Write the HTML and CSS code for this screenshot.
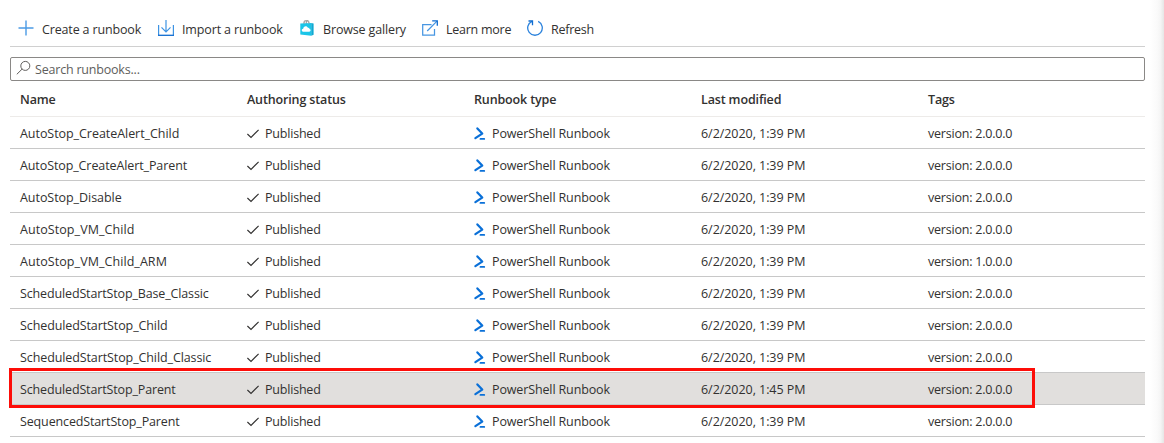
FILE: index.html
```html
<!DOCTYPE html>
<html lang="en">
<head>
<meta charset="utf-8">
<title>Runbooks</title>
<link rel="stylesheet" href="styles.css">
</head>
<body>
<svg class="defs" width="0" height="0">
  <symbol id="check" viewBox="0 0 12 10"><path d="M.4 5 4 8.4 11.6 .8" fill="none" stroke="#323130" stroke-width="1.15"/></symbol>
  <symbol id="ps" viewBox="0 0 12 14"><path d="M3.4 1.4 8.2 6.6 1.4 11.2" fill="none" stroke="#0a70d8" stroke-width="2.2" stroke-linecap="round" stroke-linejoin="round"/><path d="M6.5 11.9h3.7" stroke="#0a70d8" stroke-width="1.9" stroke-linecap="round"/></symbol>
</svg>
<main class="blade">
  <nav class="toolbar">
    <button class="command create"><svg width="16" height="16" viewBox="0 0 16 16"><path d="M8 .5v15M.5 8h15" stroke="#4b9be5" stroke-width="1.4"/></svg><span>Create a runbook</span></button>
    <button class="command import"><svg width="16" height="16" viewBox="0 0 16 16"><path d="M.6 5v10M15.4 5v10M8 0v12M3.5 7.3 8 12l4.5-4.7" fill="none" stroke="#3d93e3" stroke-width="1.2"/><path d="M0 15.3h16" stroke="#0f6cd0" stroke-width="1.3"/></svg><span>Import a runbook</span></button>
    <button class="command gallery"><svg width="14" height="16" viewBox="0 0 14 16"><path d="M4 4.5V2.2Q4 .7 5.4.7h2Q8.9.7 8.9 2.2v2.3M6.3 4V2q0-1.3 1.4-1.3" fill="none" stroke="#999" stroke-width="1.1"/><path d="M.3 3.5 11.2 3v12.7L.3 14.5z" fill="#1bc5e8"/><path d="m11.2 3 2.4.5v11.3l-2.4.9z" fill="#10a9d2"/><path d="M4.4 3.7V2.2q0-1.3 1.2-1.3h1.9q1.2 0 1.2 1.3v1.5" fill="none" stroke="#aaa" stroke-width=".8"/><path d="M3.6 11.7c-2.3 0-2.5-2.8-.4-3 .1-3 4-3.4 4.7-.9 1.4-.2 1.7.8 1.6 1.3 1.7.2 1.4 2.6-.3 2.6z" fill="#fff"/></svg><span>Browse gallery</span></button>
    <button class="command learn"><svg width="16" height="16" viewBox="0 0 16 16"><path d="M9.5 4.5H.7v10.7h11.8V9M5.2 11 15 1.1" fill="none" stroke="#4796e2" stroke-width="1.25"/><path d="M10.2.8h5.1v5" fill="none" stroke="#0f6cd0" stroke-width="1.3"/></svg><span>Learn more</span></button>
    <button class="command refresh"><svg width="16" height="16" viewBox="0 0 16 16"><path d="M11.2 1.4A7.3 7.3 0 1 1 5 1.3" fill="none" stroke="#2b82dc" stroke-width="1.3"/><path d="M1.5 1h4v4.2" fill="none" stroke="#0f6cd0" stroke-width="1.3"/></svg><span>Refresh</span></button>
  </nav>
  <label class="search"><svg width="16" height="16" viewBox="0 0 16 16"><circle cx="9.3" cy="5.9" r="4.5" fill="none" stroke="#605e5c"/><path d="M6.1 9.1.8 14.3" stroke="#605e5c"/></svg><span>Search runbooks...</span></label>
  <section class="table">
    <div class="row head"><span>Name</span><span>Authoring status</span><span>Runbook type</span><span>Last modified</span><span>Tags</span></div>
    <div class="row"><span class="wide">AutoStop_CreateAlert_Child</span><span class="status"><svg><use href="#check"/></svg>Published</span><span class="type"><svg><use href="#ps"/></svg>PowerShell Runbook</span><span class="date">6/2/2020, 1:39 PM</span><span class="tag">version: 2.0.0.0</span></div>
    <div class="row"><span>AutoStop_CreateAlert_Parent</span><span class="status"><svg><use href="#check"/></svg>Published</span><span class="type"><svg><use href="#ps"/></svg>PowerShell Runbook</span><span class="date">6/2/2020, 1:39 PM</span><span class="tag">version: 2.0.0.0</span></div>
    <div class="row"><span class="wide">AutoStop_Disable</span><span class="status"><svg><use href="#check"/></svg>Published</span><span class="type"><svg><use href="#ps"/></svg>PowerShell Runbook</span><span class="date">6/2/2020, 1:39 PM</span><span class="tag">version: 2.0.0.0</span></div>
    <div class="row"><span class="wider">AutoStop_VM_Child</span><span class="status"><svg><use href="#check"/></svg>Published</span><span class="type"><svg><use href="#ps"/></svg>PowerShell Runbook</span><span class="date">6/2/2020, 1:39 PM</span><span class="tag">version: 2.0.0.0</span></div>
    <div class="row"><span class="wider">AutoStop_VM_Child_ARM</span><span class="status"><svg><use href="#check"/></svg>Published</span><span class="type"><svg><use href="#ps"/></svg>PowerShell Runbook</span><span class="date">6/2/2020, 1:39 PM</span><span class="tag">version: 1.0.0.0</span></div>
    <div class="row"><span class="tight">ScheduledStartStop_Base_Classic</span><span class="status"><svg><use href="#check"/></svg>Published</span><span class="type"><svg><use href="#ps"/></svg>PowerShell Runbook</span><span class="date">6/2/2020, 1:39 PM</span><span class="tag">version: 2.0.0.0</span></div>
    <div class="row"><span>ScheduledStartStop_Child</span><span class="status"><svg><use href="#check"/></svg>Published</span><span class="type"><svg><use href="#ps"/></svg>PowerShell Runbook</span><span class="date">6/2/2020, 1:39 PM</span><span class="tag">version: 2.0.0.0</span></div>
    <div class="row"><span>ScheduledStartStop_Child_Classic</span><span class="status"><svg><use href="#check"/></svg>Published</span><span class="type"><svg><use href="#ps"/></svg>PowerShell Runbook</span><span class="date">6/2/2020, 1:39 PM</span><span class="tag">version: 2.0.0.0</span></div>
    <div class="row selected"><span class="tight">ScheduledStartStop_Parent</span><span class="status"><svg><use href="#check"/></svg>Published</span><span class="type"><svg><use href="#ps"/></svg>PowerShell Runbook</span><span class="date">6/2/2020, 1:45 PM</span><span class="tag">version: 2.0.0.0</span><i class="highlight"></i></div>
    <div class="row"><span class="tight">SequencedStartStop_Parent</span><span class="status"><svg><use href="#check"/></svg>Published</span><span class="type"><svg><use href="#ps"/></svg>PowerShell Runbook</span><span class="date">6/2/2020, 1:39 PM</span><span class="tag">version: 2.0.0.0</span></div>
  </section>
</main>
<div class="edge"></div>
</body>
</html>
```
FILE: styles.css
```css
* { box-sizing: border-box; }
body {
  margin: 0;
  height: 443px;
  overflow: hidden;
  display: flex;
  background: #fff;
  color: #323130;
  font: 12.5px/18px "Open Sans", "Noto Sans", sans-serif;
  letter-spacing: -0.1px;
}
.defs { position: absolute; }
.blade { width: 1135px; margin-left: 10px; }
.edge {
  width: 14px;
  margin-left: auto;
  background: linear-gradient(to right, #fff, #fafafa 50%, #f5f5f5 75%, #e6e6e6);
}
.toolbar {
  height: 47px;
  padding: 12px 0 0 8px;
  border-bottom: 1px solid #d0d0d0;
  display: flex;
  align-items: flex-start;
}
.command {
  display: flex;
  gap: 8px;
  padding: 0;
  border: 0;
  background: none;
  color: inherit;
  font: inherit;
  letter-spacing: -0.15px;
  height: 34px;
  align-items: center;
  white-space: nowrap;
}
.command svg { flex: none; margin-top: -2px; }
.command span, .search span { padding-top: 2px; }
.create { width: 140px; }
.import { width: 142px; letter-spacing: -0.14px; }
.gallery { width: 122px; gap: 9px; }
.learn { width: 105px; letter-spacing: -0.25px; }
.refresh { letter-spacing: -0.25px; }
.search {
  display: flex;
  align-items: center;
  height: 24px;
  margin-top: 10px;
  padding-left: 5px;
  gap: 3px;
  border: 1px solid #8a8886;
  border-radius: 2px;
  color: #605e5c;
  letter-spacing: -0.2px;
}
.search svg { margin-top: -2px; }
.row {
  position: relative;
  display: grid;
  grid-template-columns: repeat(5, 227px);
  align-items: center;
  height: 32px;
  padding: 2px 0 0 10px;
  border-bottom: 1px solid #c8c8c8;
  white-space: nowrap;
}
.row > span { width: 227px; }
.head {
  height: 36px;
  border-bottom-color: #edebe9;
  font-weight: 600;
  letter-spacing: -0.14px;
}
.wide { letter-spacing: -0.05px; }
.wider { letter-spacing: 0.07px; }
.tight { letter-spacing: -0.14px; }
.status, .type { display: flex; align-items: center; gap: 6px; }
.status { letter-spacing: -0.2px; }
.type { letter-spacing: -0.13px; }
.date { letter-spacing: -0.05px; }
.tag { letter-spacing: -0.22px; }
.status svg { width: 12px; height: 10px; }
.type svg { width: 12px; height: 14px; }
.selected { background: #e1dfdd; }
.highlight {
  position: absolute;
  left: -1px;
  top: -5px;
  width: 1026px;
  height: 40px;
  border: 3px solid #fd0d08;
}
```
